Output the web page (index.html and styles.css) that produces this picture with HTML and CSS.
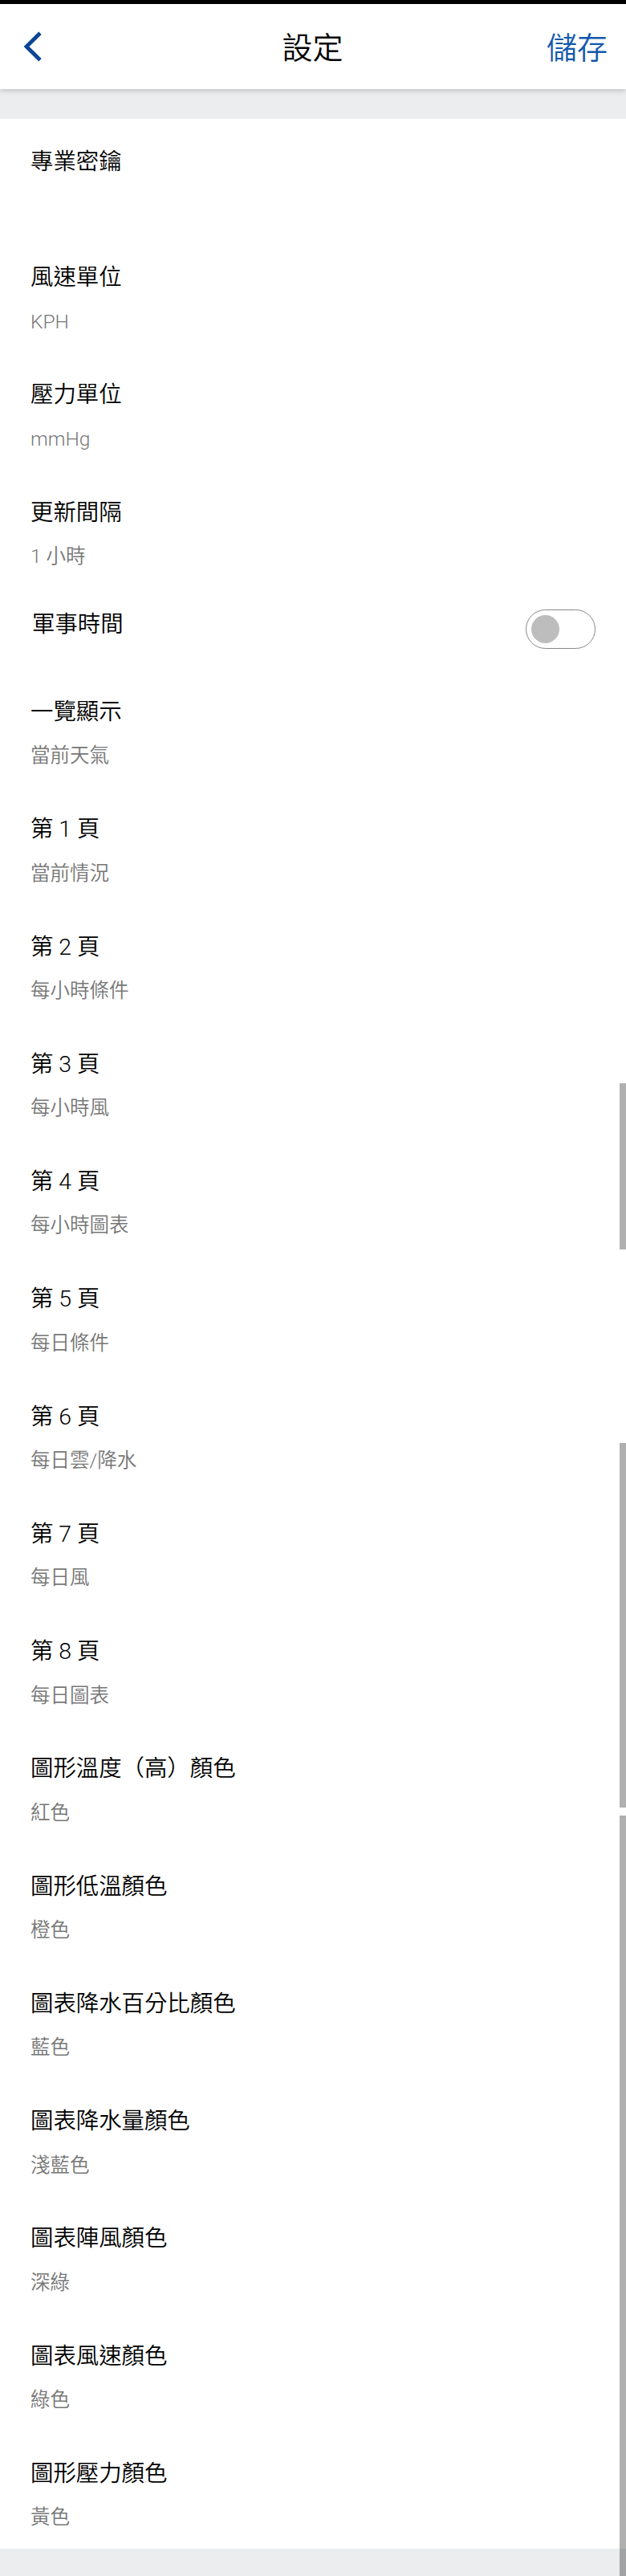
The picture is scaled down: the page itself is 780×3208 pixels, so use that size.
FILE: index.html
```html
<!DOCTYPE html>
<html lang="zh-TW">
<head>
    <meta charset="UTF-8">
    <meta name="viewport" content="width=device-width, initial-scale=1.0">
    <title>設定</title>
    <link rel="stylesheet" href="styles.css">
</head>
<body>
    <header class="header">
        <a class="back" href="#" aria-label="返回">
            <svg width="24" height="40" viewBox="0 0 24 40">
                <path d="M21 3.2 L4 20 L21 36.8" fill="none" stroke="#0b4595" stroke-width="4.8"/>
            </svg>
        </a>
        <h1 class="title">設定</h1>
        <a class="save" href="#">儲存</a>
    </header>

    <main class="settings">
        <div class="item item-key">
            <div class="label">專業密鑰</div>
        </div>
        <div class="item">
            <div class="label">風速單位</div>
            <div class="value">KPH</div>
        </div>
        <div class="item">
            <div class="label">壓力單位</div>
            <div class="value">mmHg</div>
        </div>
        <div class="item">
            <div class="label">更新間隔</div>
            <div class="value">1 小時</div>
        </div>
        <div class="item item-toggle">
            <div class="label">軍事時間</div>
            <div class="switch"><span class="knob"></span></div>
        </div>
        <div class="item">
            <div class="label">一覽顯示</div>
            <div class="value">當前天氣</div>
        </div>
        <div class="item">
            <div class="label">第 1 頁</div>
            <div class="value">當前情況</div>
        </div>
        <div class="item">
            <div class="label">第 2 頁</div>
            <div class="value">每小時條件</div>
        </div>
        <div class="item">
            <div class="label">第 3 頁</div>
            <div class="value">每小時風</div>
        </div>
        <div class="item">
            <div class="label">第 4 頁</div>
            <div class="value">每小時圖表</div>
        </div>
        <div class="item">
            <div class="label">第 5 頁</div>
            <div class="value">每日條件</div>
        </div>
        <div class="item">
            <div class="label">第 6 頁</div>
            <div class="value">每日雲/降水</div>
        </div>
        <div class="item">
            <div class="label">第 7 頁</div>
            <div class="value">每日風</div>
        </div>
        <div class="item">
            <div class="label">第 8 頁</div>
            <div class="value">每日圖表</div>
        </div>
        <div class="item">
            <div class="label">圖形溫度（高）顏色</div>
            <div class="value">紅色</div>
        </div>
        <div class="item">
            <div class="label">圖形低溫顏色</div>
            <div class="value">橙色</div>
        </div>
        <div class="item">
            <div class="label">圖表降水百分比顏色</div>
            <div class="value">藍色</div>
        </div>
        <div class="item">
            <div class="label">圖表降水量顏色</div>
            <div class="value">淺藍色</div>
        </div>
        <div class="item">
            <div class="label">圖表陣風顏色</div>
            <div class="value">深綠</div>
        </div>
        <div class="item">
            <div class="label">圖表風速顏色</div>
            <div class="value">綠色</div>
        </div>
        <div class="item">
            <div class="label">圖形壓力顏色</div>
            <div class="value">黃色</div>
        </div>
    </main>

    <div class="scrollbar scrollbar-top"></div>
    <div class="scrollbar scrollbar-middle"></div>
    <div class="scrollbar scrollbar-bottom"></div>
</body>
</html>
```
FILE: styles.css
```css
* {
    box-sizing: border-box;
}
body {
    position: relative;
    margin: 0;
    height: 3208px;
    overflow: hidden;
    background-color: #ebedef;
    font-family: "Roboto Light", Roboto, "Noto Sans CJK TC", sans-serif;
    font-weight: 350;
    color: #000;
}
a {
    text-decoration: none;
}
.header {
    display: grid;
    grid-template-columns: 1fr auto 1fr;
    align-items: center;
    height: 111px;
    padding: 0 23px 0 29px;
    border-top: 5px solid #000;
    background-color: #fff;
    box-shadow: 0 1px 7px rgba(0, 0, 0, 0.25);
}
.back {
    height: 40px;
}
.back svg {
    display: block;
}
.title {
    margin: 4px 7px 0 0;
    font-size: 38px;
    font-weight: 350;
    line-height: 56px;
}
.save {
    justify-self: end;
    margin-top: 4px;
    font-size: 38px;
    line-height: 56px;
    color: #1259ac;
}
.settings {
    margin-top: 37px;
    background-color: #fff;
}
.item {
    height: 146.27px;
    padding: 33.6px 38px 0;
}
.item-key {
    height: 144.6px;
}
.label {
    font-size: 28.4px;
    line-height: 40px;
}
.value {
    margin-top: 16.4px;
    font-size: 24.5px;
    line-height: 36px;
    color: #777;
}
.item-toggle {
    display: flex;
    justify-content: space-between;
    height: 102px;
    padding: 27px 38px 0 40px;
}
.switch {
    width: 87px;
    height: 49px;
    margin-top: 1px;
    padding: 6px;
    border: 1px solid #888;
    border-radius: 25px;
}
.knob {
    display: block;
    width: 35px;
    height: 35px;
    border-radius: 50%;
    background-color: #bdbdbd;
}
/* scroll indicators over the list */
.scrollbar {
    position: absolute;
    right: 0;
    width: 8px;
    background-color: rgba(0, 0, 0, 0.31);
}
.scrollbar-top {
    top: 1349px;
    height: 207px;
}
.scrollbar-middle {
    top: 1797px;
    height: 454px;
}
.scrollbar-bottom {
    top: 2261px;
    height: 947px;
}
```
